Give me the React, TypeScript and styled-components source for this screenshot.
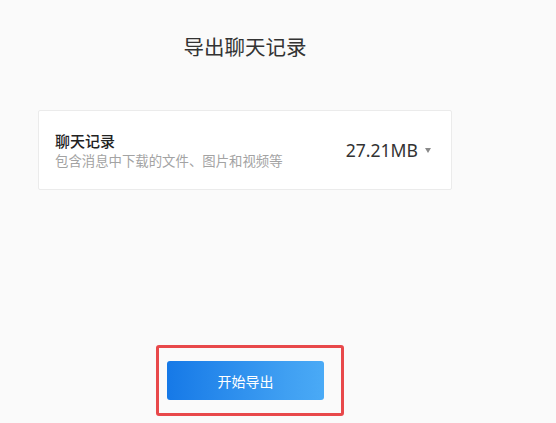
import React from 'react';
import styled, { createGlobalStyle } from 'styled-components';

const GlobalStyle = createGlobalStyle`
  html, body {
    margin: 0;
    padding: 0;
    background: #fafafa;
  }
  body {
    font-family: "Noto Sans", "Noto Sans CJK SC", sans-serif;
    color: #333;
  }
`;

const Panel = styled.div`
  width: 490px;
  height: 423px;
  display: flex;
  flex-direction: column;
  align-items: center;
  box-sizing: border-box;
  padding-top: 32px;
`;

const Title = styled.h1`
  margin: 0;
  font-family: "Noto Sans CJK SC", sans-serif;
  font-size: 20.5px;
  line-height: 28px;
  font-weight: 400;
  color: #333;
`;

const Card = styled.div`
  margin-top: 50px;
  width: 414px;
  height: 80px;
  box-sizing: border-box;
  background: #fff;
  border: 1px solid #ebebeb;
  border-radius: 2px;
  display: flex;
  align-items: center;
  justify-content: space-between;
  padding: 0 20px 0 16px;
`;

const Info = styled.div`
  display: flex;
  flex-direction: column;
  gap: 1px;
`;

const ItemName = styled.div`
  font-family: "Noto Sans CJK SC", sans-serif;
  font-size: 15px;
  line-height: 18px;
  font-weight: 500;
  color: #222;
`;

const ItemDesc = styled.div`
  font-family: "Noto Sans CJK SC", sans-serif;
  font-size: 13.4px;
  line-height: 18px;
  color: #a3a3a3;
`;

const Size = styled.div`
  display: flex;
  align-items: center;
  gap: 7px;
  font-size: 17.6px;
  color: #333;
  cursor: pointer;
`;

const Caret = styled.span`
  width: 0;
  height: 0;
  border-left: 3px solid transparent;
  border-right: 3px solid transparent;
  border-top: 5px solid #8a8a8a;
  margin-top: 1px;
`;

const Highlight = styled.div`
  margin-top: 155px;
  margin-left: 10px;
  box-sizing: border-box;
  width: 188px;
  height: 71px;
  border: 3.5px solid #e8484a;
  border-radius: 3px;
  padding: 13px 15px 0 8px;
`;

const StartButton = styled.button`
  width: 157px;
  height: 39px;
  border: none;
  border-radius: 3px;
  background: linear-gradient(90deg, #1679e7 0%, #3f9ff2 75%, #4aaaf6 100%);
  color: #fff;
  font-family: "Noto Sans CJK SC", sans-serif;
  font-size: 14px;
  cursor: pointer;
`;

export default function App() {
  return (
    <>
      <GlobalStyle />
      <Panel>
        <Title>导出聊天记录</Title>
        <Card>
          <Info>
            <ItemName>聊天记录</ItemName>
            <ItemDesc>包含消息中下载的文件、图片和视频等</ItemDesc>
          </Info>
          <Size>
            27.21MB
            <Caret />
          </Size>
        </Card>
        <Highlight>
          <StartButton>开始导出</StartButton>
        </Highlight>
      </Panel>
    </>
  );
}
